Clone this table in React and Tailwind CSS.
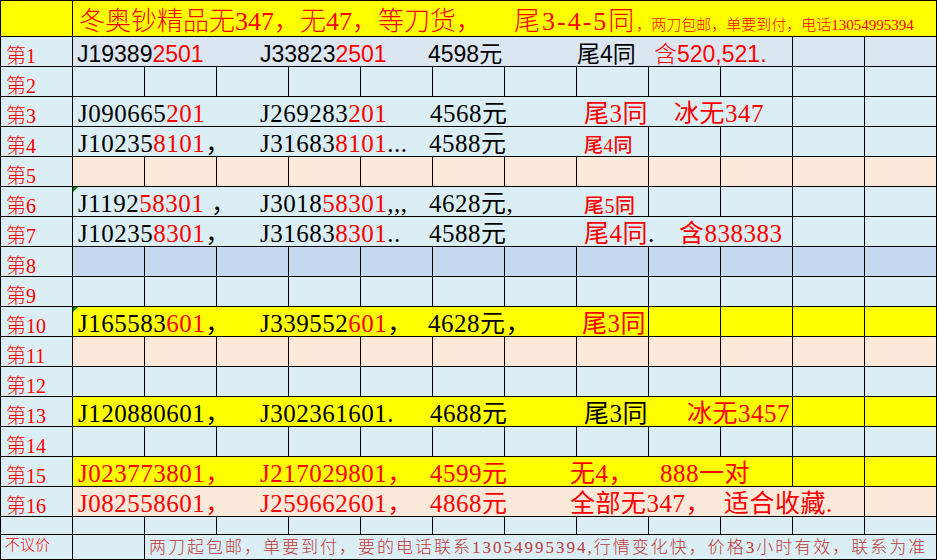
// 표 스타일 상수
const W = {
    1: "w-[72px]",
    8: "w-[576px]",
    10: "w-[720px]",
    11: "w-[792px]",
    12: "w-[864px]",
};
const BLUE = "bg-[#daeef3]";
const GRAY = "bg-[#dce6f1]";
const DEEP = "bg-[#c5d9f1]";
const PEACH = "bg-[#fde9d9]";
const YELLOW = "bg-[#ffff00]";

const SERIF = "font-['Liberation_Serif','Noto_Sans_CJK_SC',serif]";
const SANS = "font-['Liberation_Sans','Noto_Sans_CJK_SC',sans-serif]";

const Cell = ({ span = 1, bg, className = "", children }) => (
    <div
        className={`relative shrink-0 h-full border-r border-black flex items-end whitespace-nowrap leading-none ${W[span]} ${bg} ${className}`}
    >
        {children}
    </div>
);

const Blanks = ({ n, bg }) =>
    Array.from({ length: n }, (_, i) => <Cell key={i} bg={bg} />);

const Row = ({ label, h = "h-[30px]", children }) => (
    <div className={`flex border-b border-black ${h}`}>
        <Cell bg={BLUE} className={`pl-[5px] text-[20px] font-light text-[#ff0000] ${SERIF}`}>
            {label}
        </Cell>
        {children}
    </div>
);

const Seg = ({ w = "", children }) => (
    <div className={`shrink-0 ${w}`}>{children}</div>
);

const R = ({ children }) => <span className="text-[#ff0000]">{children}</span>;

// 초록 삼각형 (메모 표시)
const Tri = () => (
    <div className="absolute top-0 left-0 w-0 h-0 border-t-[5px] border-r-[5px] border-t-[#008000] border-r-transparent" />
);

const DATA = `pl-[5px] text-[25px] tracking-[0.5px] text-black ${SERIF}`;

export default function App() {
    return (
        <div className="w-[937px] h-[560px] border-l border-t border-black bg-white overflow-hidden">
            {/* 제목 */}
            <div className="flex border-b border-black h-[36px]">
                <Cell bg={YELLOW} />
                <Cell
                    span={12}
                    bg={YELLOW}
                    className={`pl-[6px] pb-[1px] text-[#ff0000] font-light ${SERIF}`}
                >
                    <Seg w="w-[435px] text-[26px]">冬奥钞精品无347，无47，等刀货，</Seg>
                    <Seg w="text-[26px] tracking-[2px]">尾3-4-5同</Seg>
                    <Seg w="text-[15px] mb-[2px]">，两刀包邮，单要到付，电话13054995394</Seg>
                </Cell>
            </div>

            <Row label="第1">
                <Cell span={10} bg={GRAY} className={`pl-[4px] text-[23px] text-black ${SANS}`}>
                    <Seg w="w-[183px]">J19389<R>2501</R></Seg>
                    <Seg w="w-[168px]">J33823<R>2501</R></Seg>
                    <Seg w="w-[149px]">4598元</Seg>
                    <Seg w="w-[77px]">尾4同</Seg>
                    <Seg>
                        <R>
                            <span className={`font-light ${SERIF}`}>含</span>520,521.
                        </R>
                    </Seg>
                </Cell>
                <Blanks n={2} bg={GRAY} />
            </Row>

            <Row label="第2">
                <Blanks n={12} bg={BLUE} />
            </Row>

            <Row label="第3">
                <Cell span={10} bg={BLUE} className={DATA}>
                    <Seg w="w-[182px]">J090665<R>201</R></Seg>
                    <Seg w="w-[170px]">J269283<R>201</R></Seg>
                    <Seg w="w-[154px]">4568元</Seg>
                    <Seg w="w-[90px]"><R>尾3同</R></Seg>
                    <Seg><R>冰无347</R></Seg>
                </Cell>
                <Blanks n={2} bg={BLUE} />
            </Row>

            <Row label="第4">
                <Cell span={8} bg={BLUE} className={DATA}>
                    <Seg w="w-[182px]">J10235<R>8101</R>，</Seg>
                    <Seg w="w-[169px]">J31683<R>8101</R>...</Seg>
                    <Seg w="w-[155px]">4588元</Seg>
                    <Seg w="text-[19px] font-medium mb-[1px]"><R>尾4同</R></Seg>
                </Cell>
                <Blanks n={4} bg={BLUE} />
            </Row>

            <Row label="第5">
                <Blanks n={12} bg={PEACH} />
            </Row>

            <Row label="第6">
                <Cell span={8} bg={BLUE} className={DATA}>
                    <Tri />
                    <Seg w="w-[182px]">J1192<R>58301</R> ，</Seg>
                    <Seg w="w-[169px]">J3018<R>58301</R>,,,</Seg>
                    <Seg w="w-[155px]">4628元,</Seg>
                    <Seg w="text-[20px] font-medium"><R>尾5同</R></Seg>
                </Cell>
                <Blanks n={4} bg={BLUE} />
            </Row>

            <Row label="第7">
                <Cell span={10} bg={BLUE} className={DATA}>
                    <Seg w="w-[182px]">J10235<R>8301</R>，</Seg>
                    <Seg w="w-[169px]">J31683<R>8301</R>..</Seg>
                    <Seg w="w-[155px]">4588元</Seg>
                    <Seg w="w-[95px]"><R>尾4同</R>.</Seg>
                    <Seg><R>含838383</R></Seg>
                </Cell>
                <Blanks n={2} bg={BLUE} />
            </Row>

            <Row label="第8">
                <Blanks n={12} bg={DEEP} />
            </Row>

            <Row label="第9">
                <Blanks n={12} bg={BLUE} />
            </Row>

            <Row label="第10">
                <Cell span={8} bg={YELLOW} className={DATA}>
                    <Tri />
                    <Seg w="w-[182px]">J165583<R>601</R>，</Seg>
                    <Seg w="w-[168px]">J339552<R>601</R>，</Seg>
                    <Seg w="w-[154px]">4628元，</Seg>
                    <Seg><R>尾3同</R></Seg>
                </Cell>
                <Blanks n={4} bg={YELLOW} />
            </Row>

            <Row label="第11">
                <Blanks n={12} bg={PEACH} />
            </Row>

            <Row label="第12">
                <Blanks n={12} bg={BLUE} />
            </Row>

            <Row label="第13">
                <Cell span={10} bg={YELLOW} className={DATA}>
                    <Seg w="w-[182px]">J120880601，</Seg>
                    <Seg w="w-[170px]">J302361601.</Seg>
                    <Seg w="w-[154px]">4688元</Seg>
                    <Seg w="w-[103px]">尾3同</Seg>
                    <Seg><R>冰无3457</R></Seg>
                </Cell>
                <Blanks n={2} bg={YELLOW} />
            </Row>

            <Row label="第14">
                <Blanks n={12} bg={BLUE} />
            </Row>

            <Row label="第15">
                <Cell span={10} bg={YELLOW} className={`${DATA} text-[#ff0000]`}>
                    <Seg w="w-[182px]"><R>J023773801，</R></Seg>
                    <Seg w="w-[170px]"><R>J217029801，</R></Seg>
                    <Seg w="w-[140px]"><R>4599元</R></Seg>
                    <Seg w="w-[90px]"><R>无4，</R></Seg>
                    <Seg><R>888一对</R></Seg>
                </Cell>
                <Blanks n={2} bg={YELLOW} />
            </Row>

            <Row label="第16">
                <Cell span={11} bg={PEACH} className={DATA}>
                    <Seg w="w-[182px]"><R>J082558601，</R></Seg>
                    <Seg w="w-[170px]"><R>J259662601，</R></Seg>
                    <Seg w="w-[140px]"><R>4868元</R></Seg>
                    <Seg w="w-[154px]"><R>全部无347，</R></Seg>
                    <Seg><R>适合收藏.</R></Seg>
                </Cell>
                <Cell bg={PEACH} />
            </Row>

            {/* 빈 줄 */}
            <div className="flex border-b border-black h-[18px]">
                <Blanks n={13} bg={BLUE} />
            </div>

            {/* 하단 안내 */}
            <div className="flex border-b border-black h-[25px]">
                <Cell bg={BLUE} className={`pl-[4px] pb-[6px] text-[15px] font-light text-[#ff0000] ${SERIF}`}>
                    不议价
                </Cell>
                <Cell bg={BLUE} />
                <Cell
                    span={11}
                    bg={BLUE}
                    className={`pl-[4px] pb-[3px] text-[17px] tracking-[2px] font-light text-[#c0393b] ${SERIF}`}
                >
                    两刀起包邮，单要到付，要的电话联系13054995394,行情变化快，价格3小时有效，联系为准
                </Cell>
            </div>
        </div>
    );
}
